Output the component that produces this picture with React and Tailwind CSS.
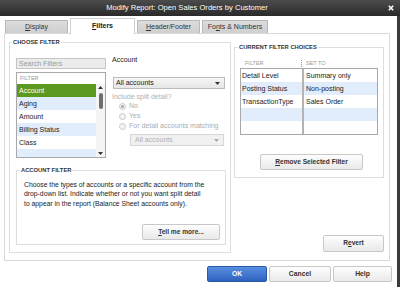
import { useState } from "react";

const Btn = ({ children, className = "" }) => (
  <button
    className={`h-[16px] border border-[#c8c8c8] rounded-[2px] bg-gradient-to-b from-[#fefefe] to-[#e9e9e9] text-[6.6px] font-bold text-[#333] leading-none ${className}`}
  >
    {children}
  </button>
);

const Tab = ({ children, active, w = "w-[63px]" }) =>
  active ? (
    <div className="relative z-10 mb-[-1px] w-[65px] h-[16px] bg-white border border-[#cfcfcf] border-b-0 flex items-center justify-center text-[7px] font-bold text-[#222]">
      {children}
    </div>
  ) : (
    <div className={`${w} h-[13px] bg-gradient-to-b from-[#dcdcdc] to-[#cfcfcf] border border-[#b8b8b8] border-b-0 flex items-center justify-center text-[7px] text-[#333]`}>
      {children}
    </div>
  );

const Radio = ({ checked, label }) => (
  <div className="flex items-center h-[10px] ml-[7px] gap-[3px]">
    <span className="w-[7px] h-[7px] rounded-full border border-[#c9c9c9] bg-[#f3f3f3] flex items-center justify-center">
      {checked && <span className="w-[3px] h-[3px] rounded-full bg-[#a8a8a8]" />}
    </span>
    <span className="text-[7px] text-[#adadad]">{label}</span>
  </div>
);

const Caret = ({ color = "#333" }) => (
  <svg width="5" height="3" viewBox="0 0 5 3">
    <path d="M0 0h5L2.5 3z" fill={color} />
  </svg>
);

const filters = ["Account", "Aging", "Amount", "Billing Status", "Class"];

const choices = [
  ["Detail Level", "Summary only"],
  ["Posting Status", "Non-posting"],
  ["TransactionType", "Sales Order"],
  ["", ""],
  ["", ""],
];

export default function App() {
  const [selected] = useState(0);

  return (
    <div className="w-[400px] h-[287px] bg-white flex flex-col overflow-hidden font-['Liberation_Sans',Arial,sans-serif] text-[#222]">
      {/* Title bar */}
      <div className="h-[16px] bg-gradient-to-b from-[#4c4c4c] to-[#2a2a2a] flex items-center">
        <div className="flex-1 flex justify-center pr-[14px] text-[7.6px] text-white leading-none">
          Modify Report: Open Sales Orders by Customer
        </div>
        <svg width="6" height="6" viewBox="0 0 6 6" className="mr-[6px]">
          <path d="M0.8 0.8L5.2 5.2M5.2 0.8L0.8 5.2" stroke="#fff" strokeWidth="1.6" />
        </svg>
      </div>

      <div className="flex flex-1">
        <div className="w-[397px] flex flex-col">
          {/* Tabs */}
          <div className="h-[17px] flex items-end pl-[5px] gap-[2px]">
            <Tab>
              <u>D</u>isplay
            </Tab>
            <Tab active>
              <u>F</u>ilters
            </Tab>
            <Tab>
              <u>H</u>eader/Footer
            </Tab>
            <Tab w="w-[66px]">
              Fo<u>n</u>ts &amp; Numbers
            </Tab>
          </div>

          {/* Tab panel */}
          <div className="ml-[4px] w-[386px] h-[228px] border border-[#d9d9d9] flex items-start pl-[4px] gap-[3px]">
            {/* Choose filter */}
            <fieldset className="mt-[4px] w-[222px] h-[215px] border border-[#dedede]">
              <legend className="ml-[2px] px-[1px] text-[5.8px] leading-[8px] font-bold text-[#333]">
                CHOOSE FILTER
              </legend>
              <div className="pl-[6px] pr-[4px] flex flex-col">
                <div className="flex gap-[6px]">
                  {/* filter list column */}
                  <div className="w-[90px] flex flex-col">
                    <div className="mt-[12px] h-[11px] border border-[#c6c6c6] bg-[#ececec] text-[7px] text-[#9a9a9a] leading-[9px] pl-[2px]">
                      Search Filters
                    </div>
                    <div className="mt-[3px] h-[86px] border border-[#a9a9a9] flex flex-col bg-white">
                      <div className="h-[11px] text-[5.5px] text-[#999] leading-[11px] pl-[3px]">FILTER</div>
                      <div className="flex flex-1 overflow-hidden">
                        <div className="flex-1 flex flex-col">
                          {filters.map((f, i) => (
                            <div
                              key={f}
                              className={`h-[13px] shrink-0 leading-[13px] text-[7px] pl-[2px] ${
                                i === selected
                                  ? "bg-[#5c9a1f] text-white"
                                  : i % 2
                                  ? "bg-[#e2edfb]"
                                  : "bg-white"
                              }`}
                            >
                              {f}
                            </div>
                          ))}
                          <div className="flex-1 bg-[#e2edfb]" />
                        </div>
                        <div className="w-[9px] bg-[#f4f4f4] flex flex-col items-center py-[2px]">
                          <svg width="5" height="3" viewBox="0 0 5 3">
                            <path d="M0 3h5L2.5 0z" fill="#333" />
                          </svg>
                          <div className="mt-[4px] w-[4px] h-[16px] rounded-[2px] bg-[#6f6f6f]" />
                          <div className="flex-1" />
                          <Caret />
                        </div>
                      </div>
                    </div>
                  </div>

                  {/* account options column */}
                  <div className="flex-1 flex flex-col">
                    <div className="mt-[9px] h-[9px] leading-[9px] text-[7px] text-[#222]">Account</div>
                    <div className="mt-[13px] ml-[1px] w-[112px] h-[12px] border border-[#bcbcbc] bg-gradient-to-b from-[#f6f6f6] to-[#e6e6e6] flex items-center justify-between pl-[2px] pr-[4px] text-[7px]">
                      All accounts
                      <Caret />
                    </div>
                    <div className="mt-[3px] h-[9px] leading-[9px] text-[7px] text-[#b0b0b0]">
                      Include split detail?
                    </div>
                    <Radio checked label="No" />
                    <Radio label="Yes" />
                    <Radio label="For detail accounts matching" />
                    <div className="mt-[3px] ml-[18px] w-[94px] h-[12px] border border-[#d6d6d6] bg-[#f1f1f1] flex items-center justify-between pl-[4px] pr-[4px] text-[7px] text-[#b0b0b0]">
                      All accounts
                      <Caret color="#aaa" />
                    </div>
                  </div>
                </div>

                {/* Account filter */}
                <fieldset className="mt-[8px] h-[79px] border border-[#dedede]">
                  <legend className="ml-[3px] px-[1px] text-[5.8px] leading-[8px] font-bold text-[#333]">
                    ACCOUNT FILTER
                  </legend>
                  <div className="flex flex-col pl-[7px] pr-[5px]">
                    <p className="mt-[6px] whitespace-nowrap text-[6.8px] leading-[9.3px] text-[#222]">
                      Choose the types of accounts or a specific account from the
                      <br />
                      drop-down list. Indicate whether or not you want split detail
                      <br />
                      to appear in the report (Balance Sheet accounts only).
                    </p>
                    <Btn className="mt-[16px] self-end w-[78px]">
                      <u>T</u>ell me more...
                    </Btn>
                  </div>
                </fieldset>
              </div>
            </fieldset>

            {/* Current filter choices */}
            <div className="flex flex-col h-[218px]">
              <fieldset className="mt-[9px] w-[150px] h-[135px] border border-[#dedede]">
                <legend className="ml-[3px] px-[1px] text-[5.8px] leading-[8px] font-bold text-[#333]">
                  CURRENT FILTER CHOICES
                </legend>
                <div className="flex flex-col pl-[5px]">
                  <div className="mt-[7px] h-[10px] flex items-center text-[5.5px] text-[#999]">
                    <span className="w-[61px] pl-[5px]">FILTER</span>
                    <span className="h-[7px] border-l border-dotted border-[#999]" />
                    <span className="pl-[4px]">SET TO</span>
                  </div>
                  <div className="w-[138px] border border-[#a8a8a8] flex flex-col">
                    {choices.map(([a, b], i) => (
                      <div
                        key={i}
                        className={`h-[13px] flex leading-[13px] text-[7px] ${i % 2 ? "bg-[#e2edfb]" : "bg-white"}`}
                      >
                        <span className="w-[63px] pl-[1px] border-r-2 border-[#b4b4b4]">{a}</span>
                        <span className="pl-[2px]">{b}</span>
                      </div>
                    ))}
                  </div>
                  <Btn className="mt-[19px] ml-[20px] w-[103px]">
                    <u>R</u>emove Selected Filter
                  </Btn>
                </div>
              </fieldset>
              <Btn className="mt-auto self-end w-[61px] h-[17px]">
                R<u>e</u>vert
              </Btn>
            </div>
          </div>

          {/* Dialog buttons */}
          <div className="mt-[5px] flex justify-end gap-[2px] pr-[5px]">
            <button className="w-[60px] h-[16px] rounded-[2px] border border-[#2b58a8] bg-gradient-to-b from-[#5a8ee0] to-[#2e62c0] text-white text-[6.8px] font-bold">
              OK
            </button>
            <Btn className="w-[62px] text-[6.8px]">Cancel</Btn>
            <Btn className="w-[59px] text-[6.8px]">Help</Btn>
          </div>
        </div>
        <div className="w-[3px] bg-[#3a3a3a]" />
      </div>
    </div>
  );
}
